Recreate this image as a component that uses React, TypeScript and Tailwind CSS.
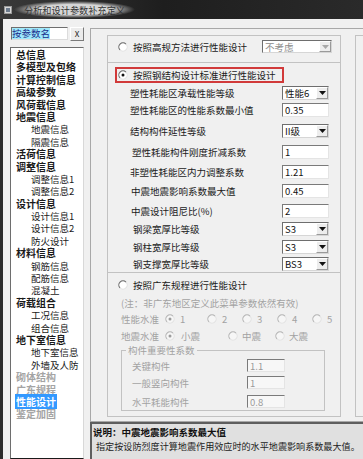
import React from "react";

const FONT = "[font-family:'Noto_Sans_CJK_SC',sans-serif]";

/* ── nav data: 0 = group, 1 = child, 2 = greyed group, 3 = selected ── */
const NAV: [string, number][] = [
  ["总信息", 0], ["多模型及包络", 0], ["计算控制信息", 0], ["高级参数", 0], ["风荷载信息", 0],
  ["地震信息", 0], ["地震信息", 1], ["隔震信息", 1], ["活荷信息", 0], ["调整信息", 0],
  ["调整信息1", 1], ["调整信息2", 1], ["设计信息", 0], ["设计信息1", 1], ["设计信息2", 1],
  ["防火设计", 1], ["材料信息", 0], ["钢筋信息", 1], ["配筋信息", 1], ["混凝土", 1],
  ["荷载组合", 0], ["工况信息", 1], ["组合信息", 1], ["地下室信息", 0], ["地下室信息", 1],
  ["外墙及人防", 1], ["砌体结构", 2], ["广东规程", 2], ["性能设计", 3], ["鉴定加固", 2],
];

const ROWS = [
  { label: "塑性耗能区承载性能等级", v: "性能6", sel: true, mt: "mt-[3px]", pl: "pl-[22px]" },
  { label: "塑性耗能区的性能系数最小值", v: "0.35", sel: false, mt: "mt-[3px]", pl: "pl-[22px]" },
  { label: "结构构件延性等级", v: "II级", sel: true, mt: "mt-[7px]", pl: "pl-[22px]" },
  { label: "塑性耗能构件刚度折减系数", v: "1", sel: false, mt: "mt-[7px]", pl: "pl-[24px]" },
  { label: "非塑性耗能区内力调整系数", v: "1.21", sel: false, mt: "mt-[6px]", pl: "pl-[22px]" },
  { label: "中震地震影响系数最大值", v: "0.45", sel: false, mt: "mt-[5px]", pl: "pl-[23px]" },
  { label: "中震设计阻尼比(%)", v: "2", sel: false, mt: "mt-[6px]", pl: "pl-[23px]" },
  { label: "钢梁宽厚比等级", v: "S3", sel: true, mt: "mt-[4px]", pl: "pl-[25px]" },
  { label: "钢柱宽厚比等级", v: "S3", sel: true, mt: "mt-[4px]", pl: "pl-[25px]" },
  { label: "钢支撑宽厚比等级", v: "BS3", sel: true, mt: "mt-[3px]", pl: "pl-[25px]" },
];

/* classic 3D radio */
function Radio({ on, dim }: { on?: boolean; dim?: boolean }) {
  return (
    <svg width="10" height="10" viewBox="0 0 12 12" className="shrink-0">
      <circle cx="6" cy="6" r="5" fill={dim ? "#f6f6f6" : "#fff"} />
      <path d="M9.54 2.46A5 5 0 0 0 2.46 9.54" fill="none" stroke={dim ? "#b4b4b4" : "#6a6a6a"} strokeWidth="1.3" />
      <path d="M2.46 9.54A5 5 0 0 0 9.54 2.46" fill="none" stroke="#e2e2e2" strokeWidth="1.3" />
      {on && <circle cx="6" cy="6" r="1.8" fill={dim ? "#9c9c9c" : "#111"} />}
    </svg>
  );
}

function Drop({ value, dim, className }: { value: string; dim?: boolean; className: string }) {
  return (
    <div className={`flex items-stretch bg-white border border-t-[#6e6e6e] border-l-[#6e6e6e] border-r-[#d6d6d6] border-b-[#d6d6d6] ${className}`}>
      <span className={`flex-1 pl-[2px] flex items-center ${dim ? "text-[#8c8c8c]" : "text-[#111]"}`}>{value}</span>
      <span className="w-[12px] flex items-center justify-center bg-[#ededed] border border-t-white border-l-white border-r-[#9a9a9a] border-b-[#9a9a9a]">
        <svg width="7" height="4" viewBox="0 0 7 4"><path d="M0 0h7L3.5 4z" fill={dim ? "#a8a8a8" : "#111"} /></svg>
      </span>
    </div>
  );
}

function Field({ value, dim, className }: { value: string; dim?: boolean; className: string }) {
  return (
    <div className={`flex items-center pl-[2px] border border-t-[#7a7a7a] border-l-[#7a7a7a] border-r-[#e4e4e4] border-b-[#e4e4e4] ${dim ? "bg-[#f7f7f7] text-[#9a9a9a]" : "bg-white text-[#111]"} ${className}`}>
      {value}
    </div>
  );
}

export default function App() {
  return (
    <div className={`w-[363px] h-[459px] overflow-hidden bg-[#f0f0f0] text-[9.5px] leading-[12px] text-[#1a1a1a] ${FONT}`}>
      {/* title bar */}
      <div className="h-[19px] flex items-center bg-[linear-gradient(90deg,#3a3a3a_0%,#1e1e1e_45%,#2a2a2a_100%)]">
        <svg width="8" height="8" viewBox="0 0 8 8" className="ml-[4px] shrink-0">
          <rect x="0.5" y="0.5" width="7" height="7" fill="#d8d8d8" stroke="#9a9a9a" />
          <rect x="2" y="2" width="4" height="4" fill="#6c7a8c" />
        </svg>
        <span className="ml-[2px] px-[10px] h-[17px] flex items-center whitespace-nowrap text-[9.2px] text-[#333] bg-[radial-gradient(closest-side,#d6d6d6_60%,rgba(214,214,214,0))]">
          分析和设计参数补充定义
        </span>
      </div>

      <div className="flex h-[440px]">
        <div className="w-[3px] bg-[#2c2c2c] shrink-0" />

        {/* left: search + tree */}
        <div className="w-[87px] shrink-0 flex flex-col pl-[7px] pt-[8px]">
          <div className="flex items-start pl-[1px] gap-[2px]">
            <div className="w-[57px] h-[13px] bg-white border border-t-[#6e6e6e] border-l-[#6e6e6e] border-r-[#dcdcdc] border-b-[#dcdcdc] flex items-center">
              <span className="bg-[#9fe9fb] text-[#1b2e8c] leading-[11px]">按参数名</span>
            </div>
            <div className="w-[14px] h-[14px] flex items-center justify-center text-[8px] bg-[#ececec] border border-t-white border-l-white border-r-[#7a7a7a] border-b-[#7a7a7a]">
              X
            </div>
          </div>
          <div className="mt-[6px] w-[74px] flex-1 bg-white border border-t-[#6e6e6e] border-l-[#6e6e6e] border-r-[#d8d8d8] pt-[1px]">
            {NAV.map(([t, k], i) => (
              <div
                key={i}
                className={`h-[12.4px] leading-[12.4px] whitespace-nowrap ${k === 1 ? "pl-[20px] text-[#1a1a1a]" : "pl-[5px] font-bold text-[10px]"} ${k === 2 ? "text-[#a4a4a4]" : ""}`}
              >
                {k === 3 ? <span className="bg-[#3399ff] text-white px-[1px] -ml-[1px]">{t}</span> : t}
              </div>
            ))}
          </div>
        </div>

        {/* right: settings */}
        <div className="w-[273px] shrink-0 flex flex-col">
          <div className="mt-[9px] h-[394px] w-[320px] border border-[#a8a8a8] flex pl-[16px] pt-[6px]">
            <div className="w-[234px] shrink-0 flex flex-col">
              {/* group 1 */}
              <div className="h-[28px] border border-[#c2c2c2] flex items-start pt-[4px]">
                <div className="w-[154px] h-[13px] pl-[10px] flex items-center gap-[5px]">
                  <Radio />
                  <span>按照高规方法进行性能设计</span>
                </div>
                <Drop value="不考虑" dim className="w-[70px] h-[13px]" />
              </div>

              {/* group 2 */}
              <div className="h-[210px] border-x border-b border-[#c2c2c2] flex flex-col">
                <div className="ml-[7px] mt-[4px] w-[169px] h-[16px] border-2 border-[#d13a3a] flex items-center pl-[1px] gap-[5px]">
                  <Radio on />
                  <span>按照钢结构设计标准进行性能设计</span>
                </div>
                {ROWS.map((r) => (
                  <div key={r.label} className={`h-[14px] flex items-center ${r.mt}`}>
                    <span className={`w-[174px] shrink-0 whitespace-nowrap ${r.pl}`}>{r.label}</span>
                    {r.sel ? (
                      <Drop value={r.v} className="w-[47px] h-[14px]" />
                    ) : (
                      <Field value={r.v} className="w-[47px] h-[14px]" />
                    )}
                  </div>
                ))}
              </div>

              {/* group 3 */}
              <div className="h-[144px] border-x border-b border-[#c2c2c2] flex flex-col">
                <div className="mt-[6px] h-[12px] pl-[10px] flex items-center gap-[5px]">
                  <Radio />
                  <span>按照广东规程进行性能设计</span>
                </div>
                <div className="mt-[6px] h-[12px] pl-[13px] text-[#a2a2a2] whitespace-nowrap">(注：非广东地区定义此菜单参数依然有效)</div>
                <div className="mt-[4px] h-[12px] flex items-center text-[#a2a2a2]">
                  <span className="w-[57px] pl-[13px] shrink-0">性能水准</span>
                  {["1", "2", "3", "4", "5"].map((n, i) => (
                    <span key={n} className={`flex items-center gap-[5px] shrink-0 ${i === 0 ? "w-[42px]" : "w-[35px]"}`}>
                      <Radio dim on={i === 0} />
                      {n}
                    </span>
                  ))}
                </div>
                <div className="mt-[5px] h-[12px] flex items-center text-[#a2a2a2]">
                  <span className="w-[57px] pl-[13px] shrink-0">地震水准</span>
                  <span className="w-[63px] flex items-center gap-[6px] shrink-0"><Radio dim on />小震</span>
                  <span className="w-[47px] flex items-center gap-[4px] shrink-0"><Radio dim />中震</span>
                  <span className="flex items-center gap-[4px] shrink-0"><Radio dim />大震</span>
                </div>
                <fieldset className="ml-[13px] mt-[2px] w-[204px] border border-[#c2c2c2] pb-[2px]">
                  <legend className="ml-[4px] px-[2px] text-[#a2a2a2] leading-[12px]">构件重要性系数</legend>
                  {[
                    ["关键构件", "1.1", "mt-[3px]"],
                    ["一般竖向构件", "1", "mt-[4px]"],
                    ["水平耗能构件", "0.8", "mt-[6px]"],
                  ].map(([l, v, mt]) => (
                    <div key={l} className={`h-[13px] flex items-center ${mt}`}>
                      <span className="w-[125px] pl-[10px] shrink-0 text-[#a2a2a2]">{l}</span>
                      <Field value={v} dim className="w-[38px] h-[13px]" />
                    </div>
                  ))}
                </fieldset>
              </div>
            </div>
            <div className="ml-[14px] w-[40px] h-[382px] border border-[#c2c2c2] shrink-0" />
          </div>

          {/* description */}
          <div className="flex-1 w-[300px] bg-[#e0e0e0] border-t-2 border-l-2 border-[#5e5e5e] pt-[2px]">
            <div className="h-[12px] pl-[1px] font-bold text-[#111] whitespace-nowrap">说明：中震地震影响系数最大值</div>
            <div className="h-[12px] mt-[2px] pl-[4px] text-[9.1px] text-[#222] whitespace-nowrap">指定按设防烈度计算地震作用效应时的水平地震影响系数最大值。</div>
          </div>
        </div>
      </div>
    </div>
  );
}
